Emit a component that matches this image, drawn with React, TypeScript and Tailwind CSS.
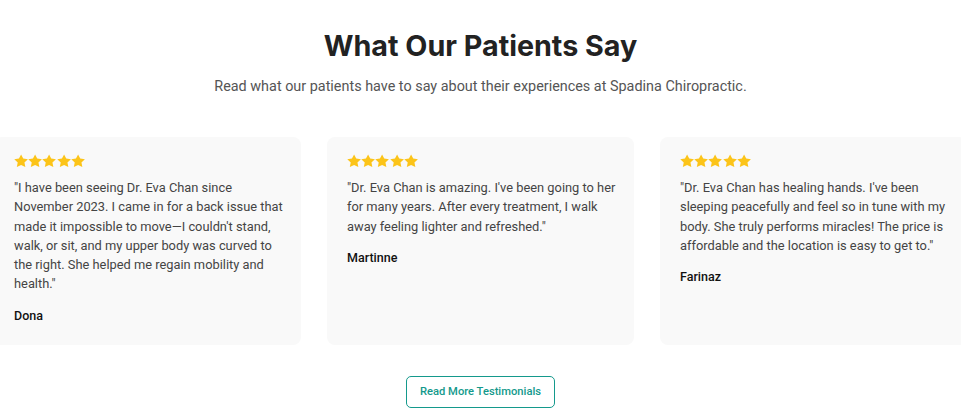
const testimonials = [
  {
    quote:
      '"I have been seeing Dr. Eva Chan since November 2023. I came in for a back issue that made it impossible to move\u2014I couldn\'t stand, walk, or sit, and my upper body was curved to the right. She helped me regain mobility and health."',
    name: 'Dona',
  },
  {
    quote:
      '"Dr. Eva Chan is amazing. I\'ve been going to her for many years. After every treatment, I walk away feeling lighter and refreshed."',
    name: 'Martinne',
  },
  {
    quote:
      '"Dr. Eva Chan has healing hands. I\'ve been sleeping peacefully and feel so in tune with my body. She truly performs miracles! The price is affordable and the location is easy to get to."',
    name: 'Farinaz',
  },
]

function Star() {
  return (
    <svg viewBox="0 0 24 23" className="w-[14.2px] h-[14px]" fill="#fcc419">
      <path d="M12 0.3l3.6 7.1 7.9 1.1-5.8 5.5 1.5 7.8L12 18.1l-7.2 3.7 1.5-7.8L0.5 8.5l7.9-1.1z" />
    </svg>
  )
}

export default function App() {
  return (
    <div
      className="w-[961px] h-[408px] bg-white overflow-hidden"
      style={{ fontFamily: 'Roboto, "Liberation Sans", sans-serif' }}
    >
      <div className="flex flex-col items-center pt-[29px]">
        <h2 className="text-[28.7px] leading-[34px] font-bold text-[#222]" style={{ fontFamily: 'Inter, Roboto, sans-serif' }}>
          What Our Patients Say
        </h2>
        <p className="mt-[14px] text-[14.4px] leading-[20px] text-[#555]">
          Read what our patients have to say about their experiences at Spadina Chiropractic.
        </p>
      </div>

      <div className="flex justify-center gap-[26px] mt-[40px]">
        {testimonials.map((t) => (
          <div
            key={t.name}
            className="w-[307px] shrink-0 h-[208px] rounded-lg bg-[#f9f9f9] pl-[20px] pr-[16px] pt-[17px]"
          >
            <div className="flex">
              {[0, 1, 2, 3, 4].map((i) => (
                <Star key={i} />
              ))}
            </div>
            <p className="mt-[10px] text-[12.85px] leading-[19.3px] text-[#444]">{t.quote}</p>
            <p className="mt-[13px] text-[12.5px] font-medium text-[#111]">{t.name}</p>
          </div>
        ))}
      </div>

      <div className="flex justify-center mt-[31px]">
        <button className="w-[149px] h-[32px] rounded-[5px] border border-[#14998c] text-[#14998c] text-[11.2px] font-medium">
          Read More Testimonials
        </button>
      </div>
    </div>
  )
}
